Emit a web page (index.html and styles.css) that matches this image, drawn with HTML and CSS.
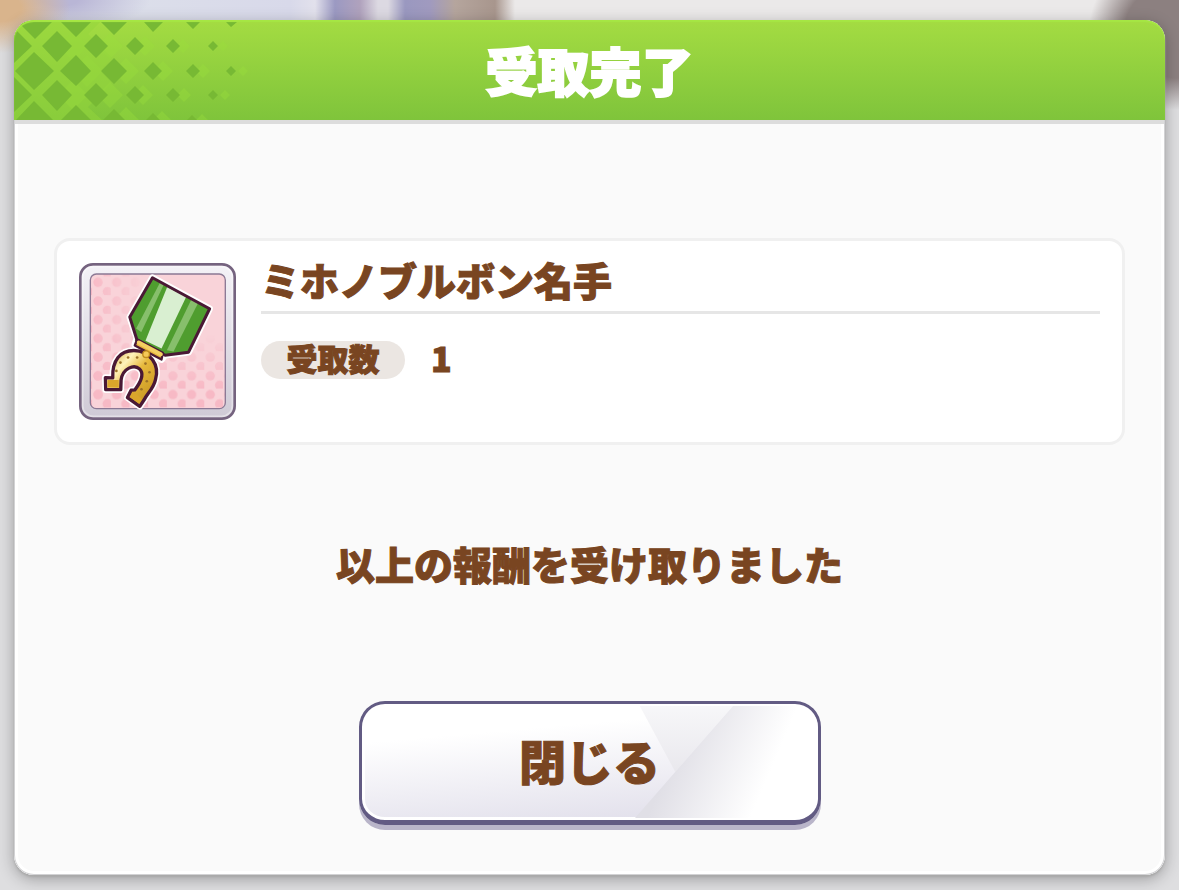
FILE: index.html
```
<!DOCTYPE html>
<html lang="ja">
<head>
	<title>受取完了</title>
	<meta charset="utf-8">
	<meta name="viewport" content="width=device-width, initial-scale=1">
	<link rel="stylesheet" href="styles.css">
</head>
<body>
	<main class="dialog" role="dialog" aria-labelledby="dialog-title">
		<header class="head">
			<svg class="pattern" width="250" height="100" viewBox="0 0 250 100" aria-hidden="true">
				<!--薄いひし形-->
				<g class="light">
					<path d="M44 26l15-15 15 15-15 15zM83 26l13-13 13 13-13 13zM121 26l10-10 10 10-10 10zM162 26l7-7 7 7-7 7zM204 26l5-5 5 5-5 5z"/>
					<path d="M57 51l16-16 16 16-16 16zM99 51l13-13 13 13-13 13zM139 51l10-10 10 10-10 10zM182 51l7-7 7 7-7 7zM224 51l5-5 5 5-5 5z"/>
					<path d="M44 75l15-15 15 15-15 15zM83 75l13-13 13 13-13 13zM119 75l10-10 10 10-10 10zM163 75l7-7 7 7-7 7zM206 75l5-5 5 5-5 5z"/>
					<path d="M99 100l13-13 13 13zM139 100l9-9 9 9zM182 100l6-6 6 6z"/>
				</g>
				<path class="mesh" d="M0 0H88L74 14 98 38 86 51 98 63 74 87 88 100H0z"/>
				<!--濃いひし形-->
				<g class="dark">
					<path d="M4 2H38L21 19zM47 2H77L62 17zM87 2H113L100 15zM130 2H149L139 12zM172 2H186L179 9zM212 2H223L217 7z"/>
					<path d="M3 11L18 26 0 43V14zM28 26L43 11 58 26 43 42zM70 26L82 14 94 26 82 38zM112 26l9-9 9 9-9 9zM152 26l7-7 7 7-7 7zM194 26l5-5 5 5-5 5z"/>
					<path d="M1 51L20 32 40 51 20 70zM46 51L62 35 77 51 62 66zM87 51L100 38 113 51 100 64zM130 51l9-9 9 9-9 9zM172 51l7-7 7 7-7 7zM212 51l5-5 5 5-5 5z"/>
					<path d="M0 57L18 75 0 92zM28 75L43 60 58 75 43 91zM70 75L82 63 94 75 82 87zM112 75l9-9 9 9-9 9zM152 75l7-7 7 7-7 7zM194 75l5-5 5 5-5 5z"/>
					<path d="M2 100L20 81 39 100zM47 100L62 85 77 100zM89 100L100 89 111 100zM132 100l7-7 7 7zM173 100l5-5 5 5z"/>
				</g>
			</svg>
			<h1 id="dialog-title">受取完了</h1>
		</header>
		<div class="content">
			<section class="item">
				<svg class="icon" width="157" height="157" viewBox="27 24 470 470" role="img" aria-label="名手のメダル">
					<defs>
						<linearGradient id="frame" x1="0" y1="0" x2="0" y2="1">
							<stop offset="0" stop-color="#f4f2f7"/>
							<stop offset="1" stop-color="#cfcad6"/>
						</linearGradient>
						<linearGradient id="gold" x1="0" y1="0" x2="1" y2="1">
							<stop offset="0" stop-color="#c99b1f"/>
							<stop offset=".3" stop-color="#fff3bb"/>
							<stop offset=".5" stop-color="#e7b93c"/>
							<stop offset="1" stop-color="#bd8a17"/>
						</linearGradient>
						<linearGradient id="fade" x1="0" y1="0" x2="1" y2="0">
							<stop offset="0" stop-color="#fff"/>
							<stop offset=".42" stop-color="#000"/>
						</linearGradient>
						<linearGradient id="fade2" x1="0" y1="0" x2="0" y2="1">
							<stop offset=".45" stop-color="#000"/>
							<stop offset=".85" stop-color="#fff"/>
						</linearGradient>
						<mask id="m1"><rect x="60" y="56" width="406" height="404" fill="url(#fade)"/></mask>
						<mask id="m2"><rect x="60" y="56" width="406" height="404" fill="url(#fade2)"/></mask>
						<pattern id="dots" x="66" y="64" width="56" height="56" patternUnits="userSpaceOnUse">
							<circle cx="18" cy="18" r="14" fill="#f7b9c5"/>
							<circle cx="46" cy="46" r="14" fill="#f7b9c5"/>
						</pattern>
						<clipPath id="ribbon"><path d="M247 68L418 161 355 291 285 300 194 257 200 248 179 186z"/></clipPath>
					</defs>
					<rect x="31" y="28" width="462" height="462" rx="38" fill="url(#frame)" stroke="#75637f" stroke-width="8"/>
					<rect x="38" y="35" width="448" height="448" rx="32" fill="none" stroke="#fff" stroke-opacity=".4" stroke-width="5"/>
					<rect x="61" y="57" width="404" height="403" rx="18" fill="#f9d3d9"/>
					<rect x="61" y="57" width="404" height="403" rx="18" fill="url(#dots)" mask="url(#m1)"/>
					<rect x="61" y="57" width="404" height="403" rx="18" fill="url(#dots)" mask="url(#m2)"/>
					<rect x="61" y="57" width="404" height="403" rx="18" fill="none" stroke="#8b7894" stroke-width="4"/>
					<!--メダルの白フチ-->
					<g fill="#fff" stroke="#fff" stroke-width="20" stroke-linejoin="round">
						<path d="M247 68L418 161 355 291 285 300 274 313 194 270 200 248 179 186z"/>
						<path fill="none" d="M106 367L128 368C126 315 151 286 191 286C241 287 269 329 256 373C250 400 232 414 223 432L209 453 172 427 183 405L194 404C213 379 222 354 208 341C192 326 158 339 153 374L152 403 107 403z"/>
					</g>
					<g clip-path="url(#ribbon)">
						<path fill="#4f9d2f" d="M170 60h260v250H170z"/>
						<path fill="#87bf6c" d="M270 82L291 94 215 232 198 220z"/>
						<path fill="#4f9d2f" d="M281 88L294 95 223 247 209 240z"/>
						<path fill="#87bf6c" d="M364 132L384 143 310 289 290 285z"/>
						<path fill="#d9efd1" d="M291 96L348 125 274 280 226 257z"/>
					</g>
					<path d="M247 68L418 161 355 291 285 300 200 253 179 186z" fill="none" stroke="#4a1935" stroke-width="9" stroke-linejoin="round"/>
					<path d="M201 253L278 293 274 313 194 271z" fill="#e8b53d" stroke="#4a1935" stroke-width="7" stroke-linejoin="round"/>
					<path d="M206 262L272 297" stroke="#f3cf62" stroke-width="12" stroke-linecap="round"/>
					<path d="M106 367L128 368C126 315 151 286 191 286C241 287 269 329 256 373C250 400 232 414 223 432L209 453 172 427 183 405L194 404C213 379 222 354 208 341C192 326 158 339 153 374L152 403 107 403z" fill="url(#gold)" stroke="#4a1935" stroke-width="10" stroke-linejoin="round"/>
					<path d="M112 374H146V397H112zM188 409L216 431 207 445 180 426z" fill="#dba62b"/>
					<circle cx="228" cy="297" r="10" fill="#f5c958" stroke="#c28c1b" stroke-width="4"/>
					<g fill="#9b7128">
						<circle cx="139" cy="347" r="4"/><circle cx="151" cy="322" r="4"/><circle cx="174" cy="307" r="4"/><circle cx="201" cy="307" r="4"/><circle cx="226" cy="325" r="4"/><circle cx="238" cy="351" r="4"/><circle cx="230" cy="378" r="4"/><circle cx="214" cy="402" r="4"/>
					</g>
				</svg>
				<div class="info">
					<h2>ミホノブルボン名手</h2>
					<dl class="count">
						<dt>受取数</dt>
						<dd>1</dd>
					</dl>
				</div>
			</section>
			<p class="message">以上の報酬を受け取りました</p>
			<button class="close" type="button">
				<svg class="shine" viewBox="0 0 190 112" preserveAspectRatio="none" aria-hidden="true">
					<defs>
						<linearGradient id="s1" x1="0" y1="0" x2="0" y2="1">
							<stop offset="0" stop-color="#f7f7f9"/>
							<stop offset="1" stop-color="#e9e8ed"/>
						</linearGradient>
						<linearGradient id="s2" gradientUnits="userSpaceOnUse" x1="40" y1="50" x2="130" y2="90">
							<stop offset="0" stop-color="#e0dfe6"/>
							<stop offset="1" stop-color="#fff"/>
						</linearGradient>
					</defs>
					<path fill="url(#s1)" d="M5 0H102L42 66z"/>
					<path fill="url(#s2)" d="M102 0H190V112H0z"/>
				</svg>
				<span>閉じる</span>
			</button>
		</div>
	</main>
</body>
</html>
```

FILE: styles.css
```
*{
	margin:0;
	padding:0;
	box-sizing:border-box;
}
body{
	min-height:100vh;
	padding:20px 14px 15px;
	display:flex;
	background:
		radial-gradient(ellipse 70px 45px at 0 8px, #d9b48c 30%, transparent),
		radial-gradient(ellipse 90px 30px at 60px 0, #b9b6d6 20%, transparent),
		radial-gradient(ellipse 90px 80px at 1179px 30px, #8c8080 60%, transparent),
		linear-gradient(90deg, #dfe3ea, #d8d9ea 290px, #e2e1ec 315px, #9b99c2 335px, #b0a2bd 360px, #dcd9e2 378px, #dcd9e2 388px, #9a98c0 405px, #a09abf 430px, #b5a59d 455px, #a8968d 495px, #ebe9e9 515px) 0 0/100% 24px no-repeat,
		#dedee0;
	font-family:"Noto Sans CJK JP", sans-serif;
	font-weight:900;
	color:#794521;
	-webkit-text-stroke:1px;
}
.dialog{
	flex:1;
	display:flex;
	flex-direction:column;
	border-radius:20px;
	background:#fafafa;
	box-shadow:inset 0 0 0 1px #d2d2d4, inset 0 0 0 4px #fff, 0 2px 2px #aaa, 0 4px 16px rgba(0,0,0,0.3);
}
.head{
	position:relative;
	height:100px;
	display:flex;
	align-items:center;
	justify-content:center;
	overflow:hidden;
	border-radius:20px 20px 0 0;
	background:linear-gradient(#a4dc42, #7fc43b);
}
.head::after{
	position:absolute;
	content:'';
	inset:0;
	border-radius:20px 20px 0 0;
	box-shadow:inset 0 2px 1px #a6e644;
}
.pattern{
	position:absolute;
	left:0;
	top:0;
}
.light{
	fill:#9be03c;
	opacity:0.35;
}
.mesh{
	fill:#94d63c;
	opacity:0.5;
}
.dark{
	fill:#77b934;
}
.head h1{
	position:relative;
	font-size:52px;
	line-height:76px;
	font-weight:900;
	color:#fff;
	-webkit-text-stroke:2px;
}
.content{
	flex:1;
	display:flex;
	flex-direction:column;
	align-items:center;
	margin:0 1px;
	padding:114px 39px 48px;
	border-top:4px solid #dcdcdc;
}
.item{
	align-self:stretch;
	display:flex;
	gap:25px;
	padding:22px;
	border:3px solid #f0f0f0;
	border-radius:16px;
	background:#fff;
}
.icon{
	flex:none;
}
.info{
	flex:1;
}
.info h2{
	height:51px;
	font-size:39px;
	line-height:32px;
	font-weight:900;
	border-bottom:3px solid #e6e6e6;
}
.count{
	display:flex;
	align-items:center;
	gap:26px;
	margin-top:27px;
	line-height:34px;
}
.count dt,
.count dd{
	padding-bottom:4px;
}
.count dt{
	width:144px;
	border-radius:20px;
	background:#ebe6e2;
	font-size:31px;
	text-align:center;
}
.count dd{
	font-size:34px;
}
.message{
	margin-top:89px;
	font-size:39px;
	line-height:58px;
}
.close{
	position:relative;
	width:462px;
	max-width:100%;
	height:124px;
	margin-top:109px;
	padding-bottom:5px;
	border:3px solid #625b83;
	border-bottom-width:5px;
	border-radius:26px;
	background:linear-gradient(175deg, #fff 25%, #e0deea 95%);
	box-shadow:inset 0 0 0 3px #fff, 0 5px 0 #b9b5c9;
	font:inherit;
	font-size:47px;
	color:inherit;
	cursor:pointer;
}
.close:active{
	box-shadow:inset 0 0 0 3px #fff;
}
.close span{
	position:relative;
}
.shine{
	position:absolute;
	right:0;
	top:2px;
	width:40%;
	height:112px;
	border-radius:0 22px 22px 0;
}
```
